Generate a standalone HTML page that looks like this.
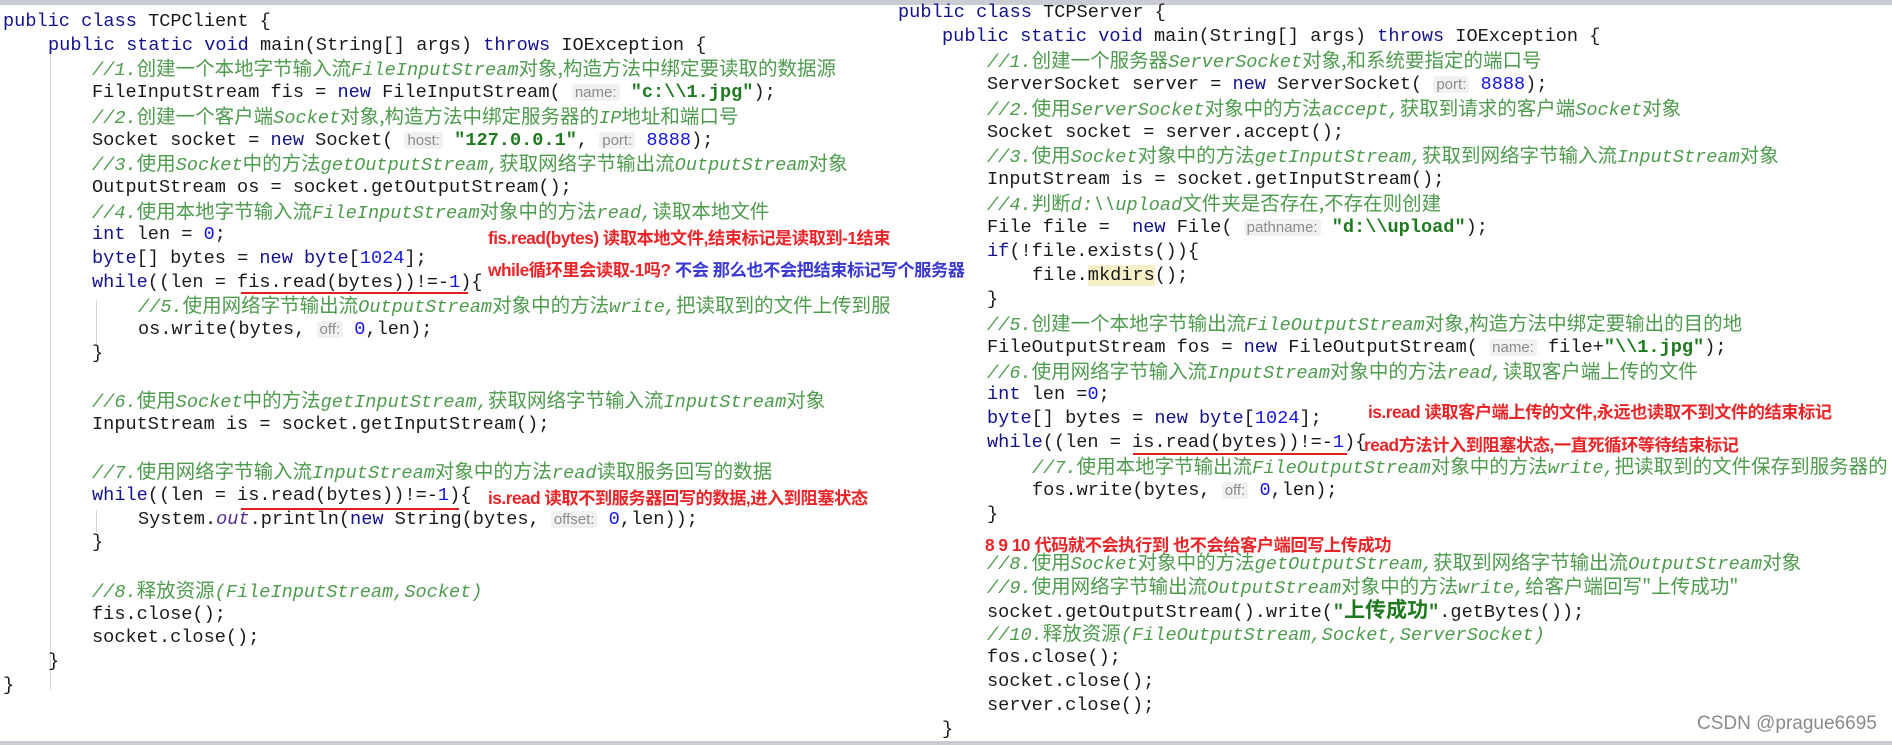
<!DOCTYPE html>
<html><head><meta charset="utf-8"><style>
*{margin:0;padding:0}
body{width:1892px;height:745px;background:#fff;position:relative;overflow:hidden;font-family:"Liberation Mono","Noto Sans CJK SC",monospace;font-size:18.6px;color:#1a1a1a}
.l{position:absolute;white-space:pre;height:24px;line-height:24px}
.k{color:#12128a}
.c{color:#4e9a4e;font-style:italic}
.z{font-style:normal;font-family:"Noto Sans CJK SC",sans-serif;font-size:19.5px;line-height:20px}
.n{color:#1515e0}
.s{color:#1f7a1f;font-weight:bold}
.h{font-family:"Liberation Sans",sans-serif;font-size:15px;color:#8c8c8c;background:#f0f1f1;border-radius:3px;padding:0 3px}
.a{position:absolute;white-space:pre;font-family:"Liberation Sans","Noto Sans CJK SC",sans-serif;font-weight:bold;font-size:17.3px;color:#e8262a;letter-spacing:-0.5px}
.b{color:#3a3ad0}
.u{position:absolute;height:2px;background:#e02020}
.g{position:absolute;width:1px;background:#d8d8d8}
</style></head><body>
<div style="position:absolute;left:0;top:0;width:1892px;height:5px;background:#c9ccd0"></div>
<div style="position:absolute;left:0;top:741px;width:1892px;height:4px;background:#c9ccd0"></div>
<div class="g" style="left:50px;top:40px;height:650px"></div>
<div class="g" style="left:96px;top:300px;height:45px"></div>
<div class="g" style="left:96px;top:510px;height:22px"></div>

<!-- LEFT -->
<div class="l" style="left:3px;top:10px"><span class="k">public class</span> TCPClient {</div>
<div class="l" style="left:48px;top:33.7px"><span class="k">public static void</span> main(String[] args) <span class="k">throws</span> IOException {</div>
<div class="l c" style="left:92px;top:57.4px">//1.<span class="z">创建一个本地字节输入流</span>FileInputStream<span class="z">对象,构造方法中绑定要读取的数据源</span></div>
<div class="l" style="left:92px;top:81.1px">FileInputStream fis = <span class="k">new</span> FileInputStream( <span class="h">name:</span> <span class="s">"c:\\1.jpg"</span>);</div>
<div class="l c" style="left:92px;top:104.8px">//2.<span class="z">创建一个客户端</span>Socket<span class="z">对象,构造方法中绑定服务器的</span>IP<span class="z">地址和端口号</span></div>
<div class="l" style="left:92px;top:128.5px">Socket socket = <span class="k">new</span> Socket( <span class="h">host:</span> <span class="s">"127.0.0.1"</span>, <span class="h">port:</span> <span class="n">8888</span>);</div>
<div class="l c" style="left:92px;top:152.2px">//3.<span class="z">使用</span>Socket<span class="z">中的方法</span>getOutputStream,<span class="z">获取网络字节输出流</span>OutputStream<span class="z">对象</span></div>
<div class="l" style="left:92px;top:175.9px">OutputStream os = socket.getOutputStream();</div>
<div class="l c" style="left:92px;top:199.6px">//4.<span class="z">使用本地字节输入流</span>FileInputStream<span class="z">对象中的方法</span>read,<span class="z">读取本地文件</span></div>
<div class="l" style="left:92px;top:223.3px"><span class="k">int</span> len = <span class="n">0</span>;</div>
<div class="l" style="left:92px;top:247px"><span class="k">byte</span>[] bytes = <span class="k">new byte</span>[<span class="n">1024</span>];</div>
<div class="l" style="left:92px;top:270.7px"><span class="k">while</span>((len = fis.read(bytes))!=-<span class="n">1</span>){</div>
<div class="l c" style="left:138px;top:294.4px">//5.<span class="z">使用网络字节输出流</span>OutputStream<span class="z">对象中的方法</span>write,<span class="z">把读取到的文件上传到服</span></div>
<div class="l" style="left:138px;top:318.1px">os.write(bytes, <span class="h">off:</span> <span class="n">0</span>,len);</div>
<div class="l" style="left:92px;top:341.8px">}</div>
<div class="l c" style="left:92px;top:389.2px">//6.<span class="z">使用</span>Socket<span class="z">中的方法</span>getInputStream,<span class="z">获取网络字节输入流</span>InputStream<span class="z">对象</span></div>
<div class="l" style="left:92px;top:412.9px">InputStream is = socket.getInputStream();</div>
<div class="l c" style="left:92px;top:460.3px">//7.<span class="z">使用网络字节输入流</span>InputStream<span class="z">对象中的方法</span>read<span class="z">读取服务回写的数据</span></div>
<div class="l" style="left:92px;top:484px"><span class="k">while</span>((len = is.read(bytes))!=-<span class="n">1</span>){</div>
<div class="l" style="left:138px;top:507.7px">System.<span style="font-style:italic;color:#5a2a8a">out</span>.println(<span class="k">new</span> String(bytes, <span class="h">offset:</span> <span class="n">0</span>,len));</div>
<div class="l" style="left:92px;top:531.4px">}</div>
<div class="l c" style="left:92px;top:578.8px">//8.<span class="z">释放资源</span>(FileInputStream,Socket)</div>
<div class="l" style="left:92px;top:602.5px">fis.close();</div>
<div class="l" style="left:92px;top:626.2px">socket.close();</div>
<div class="l" style="left:48px;top:649.9px">}</div>
<div class="l" style="left:3px;top:673.6px">}</div>

<div class="a" style="left:488px;top:224px">fis.read(bytes) 读取本地文件,结束标记是读取到-1结束</div>
<div class="a" style="left:488px;top:256px">while循环里会读取-1吗? <span class="b">不会 那么也不会把结束标记写个服务器</span></div>
<div class="a" style="left:488px;top:484px">is.read 读取不到服务器回写的数据,进入到阻塞状态</div>
<div class="u" style="left:241px;top:292px;width:227px"></div>
<div class="u" style="left:241px;top:508px;width:218px"></div>

<!-- RIGHT -->
<div class="l" style="left:898px;top:1px"><span class="k">public class</span> TCPServer {</div>
<div class="l" style="left:942px;top:24.9px"><span class="k">public static void</span> main(String[] args) <span class="k">throws</span> IOException {</div>
<div class="l c" style="left:987px;top:48.8px">//1.<span class="z">创建一个服务器</span>ServerSocket<span class="z">对象,和系统要指定的端口号</span></div>
<div class="l" style="left:987px;top:72.7px">ServerSocket server = <span class="k">new</span> ServerSocket( <span class="h">port:</span> <span class="n">8888</span>);</div>
<div class="l c" style="left:987px;top:96.6px">//2.<span class="z">使用</span>ServerSocket<span class="z">对象中的方法</span>accept,<span class="z">获取到请求的客户端</span>Socket<span class="z">对象</span></div>
<div class="l" style="left:987px;top:120.5px">Socket socket = server.accept();</div>
<div class="l c" style="left:987px;top:144.4px">//3.<span class="z">使用</span>Socket<span class="z">对象中的方法</span>getInputStream,<span class="z">获取到网络字节输入流</span>InputStream<span class="z">对象</span></div>
<div class="l" style="left:987px;top:168.3px">InputStream is = socket.getInputStream();</div>
<div class="l c" style="left:987px;top:192.2px">//4.<span class="z">判断</span>d:\\upload<span class="z">文件夹是否存在,不存在则创建</span></div>
<div class="l" style="left:987px;top:216.1px">File file =  <span class="k">new</span> File( <span class="h">pathname:</span> <span class="s">"d:\\upload"</span>);</div>
<div class="l" style="left:987px;top:240px"><span class="k">if</span>(!file.exists()){</div>
<div class="l" style="left:1032px;top:263.9px">file.<span style="background:#f6f0c8">mkdirs</span>();</div>
<div class="l" style="left:987px;top:287.8px">}</div>
<div class="l c" style="left:987px;top:311.7px">//5.<span class="z">创建一个本地字节输出流</span>FileOutputStream<span class="z">对象,构造方法中绑定要输出的目的地</span></div>
<div class="l" style="left:987px;top:335.6px">FileOutputStream fos = <span class="k">new</span> FileOutputStream( <span class="h">name:</span> file+<span class="s">"\\1.jpg"</span>);</div>
<div class="l c" style="left:987px;top:359.5px">//6.<span class="z">使用网络字节输入流</span>InputStream<span class="z">对象中的方法</span>read,<span class="z">读取客户端上传的文件</span></div>
<div class="l" style="left:987px;top:383.4px"><span class="k">int</span> len =<span class="n">0</span>;</div>
<div class="l" style="left:987px;top:407.3px"><span class="k">byte</span>[] bytes = <span class="k">new byte</span>[<span class="n">1024</span>];</div>
<div class="l" style="left:987px;top:431.2px"><span class="k">while</span>((len = is.read(bytes))!=-<span class="n">1</span>){</div>
<div class="l c" style="left:1032px;top:455.1px">//7.<span class="z">使用本地字节输出流</span>FileOutputStream<span class="z">对象中的方法</span>write,<span class="z">把读取到的文件保存到服务器的</span></div>
<div class="l" style="left:1032px;top:479px">fos.write(bytes, <span class="h">off:</span> <span class="n">0</span>,len);</div>
<div class="l" style="left:987px;top:502.9px">}</div>
<div class="a" style="left:985px;top:531px">8 9 10 代码就不会执行到 也不会给客户端回写上传成功</div>
<div class="l c" style="left:987px;top:550.7px">//8.<span class="z">使用</span>Socket<span class="z">对象中的方法</span>getOutputStream,<span class="z">获取到网络字节输出流</span>OutputStream<span class="z">对象</span></div>
<div class="l c" style="left:987px;top:574.6px">//9.<span class="z">使用网络字节输出流</span>OutputStream<span class="z">对象中的方法</span>write,<span class="z">给客户端回写"上传成功"</span></div>
<div class="l" style="left:987px;top:598.5px">socket.getOutputStream().write(<span class="s">"<span style="font-family:'Noto Sans CJK SC',sans-serif;font-size:21px;line-height:20px">上传成功</span>"</span>.getBytes());</div>
<div class="l c" style="left:987px;top:622.4px">//10.<span class="z">释放资源</span>(FileOutputStream,Socket,ServerSocket)</div>
<div class="l" style="left:987px;top:646.3px">fos.close();</div>
<div class="l" style="left:987px;top:670.2px">socket.close();</div>
<div class="l" style="left:987px;top:694.1px">server.close();</div>
<div class="l" style="left:942px;top:718px">}</div>

<div class="a" style="left:1368px;top:398px">is.read 读取客户端上传的文件,永远也读取不到文件的结束标记</div>
<div class="a" style="left:1364px;top:431px">read方法计入到阻塞状态,一直死循环等待结束标记</div>
<div class="u" style="left:1133px;top:453px;width:214px"></div>

<div style="position:absolute;left:1697px;top:713px;font-family:'Liberation Sans',sans-serif;font-size:19px;color:#8a8a8a;white-space:pre">CSDN @prague6695</div>
</body></html>
